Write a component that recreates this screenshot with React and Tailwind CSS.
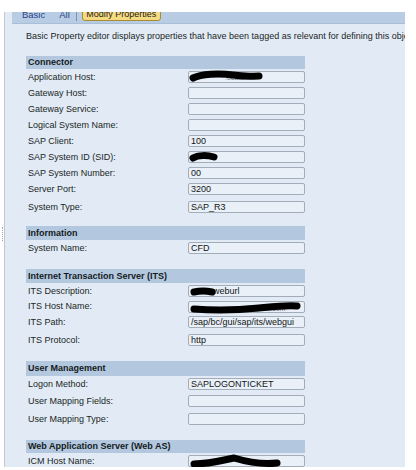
import React from "react"

const sections = [
  {
    title: "Connector",
    mt: "mt-[14px]",
    hh: "h-[13px]",
    rows: [
      { label: "Application Host:", h: "h-[16px]", mark: "app" },
      { label: "Gateway Host:", h: "h-[16px]" },
      { label: "Gateway Service:", h: "h-[16px]" },
      { label: "Logical System Name:", h: "h-[16px]" },
      { label: "SAP Client:", value: "100", h: "h-[16px]" },
      { label: "SAP System ID (SID):", h: "h-[16px]", mark: "sid" },
      { label: "SAP System Number:", value: "00", h: "h-[16px]" },
      { label: "Server Port:", value: "3200", h: "h-[16px]" },
      { label: "System Type:", value: "SAP_R3", h: "h-[20px]" },
    ],
  },
  {
    title: "Information",
    mt: "mt-[9px]",
    hh: "h-[14px]",
    rows: [{ label: "System Name:", value: "CFD", h: "h-[16px]" }],
  },
  {
    title: "Internet Transaction Server (ITS)",
    mt: "mt-[13px]",
    hh: "h-[14px]",
    rows: [
      { label: "ITS Description:", value: "weburl", h: "h-[16px]", mark: "desc" },
      { label: "ITS Host Name:", h: "h-[15px]", mark: "host" },
      { label: "ITS Path:", value: "/sap/bc/gui/sap/its/webgui", h: "h-[16px]" },
      { label: "ITS Protocol:", value: "http", h: "h-[20px]" },
    ],
  },
  {
    title: "User Management",
    mt: "mt-[11px]",
    hh: "h-[15px]",
    rows: [
      { label: "Logon Method:", value: "SAPLOGONTICKET", h: "h-[16px]" },
      { label: "User Mapping Fields:", h: "h-[18px]" },
      { label: "User Mapping Type:", h: "h-[18px]" },
    ],
  },
  {
    title: "Web Application Server (Web AS)",
    mt: "mt-[12px]",
    hh: "h-[13px]",
    rows: [{ label: "ICM Host Name:", h: "h-[16px]", mark: "icm" }],
  },
]

// black marker scribbles that hide the host names
function Scribble({ kind }) {
  if (kind === "app")
    return (
      <svg className="absolute left-0 top-0 overflow-visible" width="117" height="12">
        <text x="36" y="8" fontSize="7" fill="#6b7480" fontFamily="Liberation Sans, Arial, sans-serif">.ocal..</text>
        <path d="M4 6 C12 2, 30 1, 44 3 S62 4, 70 4" stroke="#000" strokeWidth="7" strokeLinecap="round" fill="none" />
      </svg>
    )
  if (kind === "sid")
    return (
      <svg className="absolute left-0 top-0 overflow-visible" width="117" height="12">
        <path d="M4 6 C9 3, 18 3, 25 5" stroke="#000" strokeWidth="7" strokeLinecap="round" fill="none" />
      </svg>
    )
  if (kind === "desc")
    return (
      <svg className="absolute left-0 top-0 overflow-visible" width="117" height="12">
        <path d="M5 6 C10 5, 18 5, 23 6" stroke="#000" strokeWidth="7" strokeLinecap="round" fill="none" />
      </svg>
    )
  if (kind === "host")
    return (
      <svg className="absolute left-0 top-0 overflow-visible" width="117" height="12">
        <text x="70" y="9" fontSize="7" fill="#6b7480" fontFamily="Liberation Sans, Arial, sans-serif">.ale.com</text>
        <path d="M5 7 C30 9, 50 8, 70 6 S98 3, 108 4" stroke="#000" strokeWidth="7" strokeLinecap="round" fill="none" />
      </svg>
    )
  if (kind === "icm")
    return (
      <svg className="absolute left-0 top-0 overflow-visible" width="117" height="12">
        <text x="66" y="8" fontSize="7" fill="#6b7480" fontFamily="Liberation Sans, Arial, sans-serif">....</text>
        <path d="M5 8 C20 8, 35 4, 45 2 C55 5, 70 9, 88 7" stroke="#000" strokeWidth="7" strokeLinecap="round" fill="none" />
      </svg>
    )
  return null
}

function Row({ row }) {
  return (
    <div className={`flex items-center ${row.h}`}>
      <div className="w-[162px] pl-[2px] text-[#1b1f26]">{row.label}</div>
      <div
        className={`relative h-[12px] w-[117px] rounded-[2px] border border-[#a3adb9] bg-[#e9f0f8] leading-[10px] text-[#141414] ${
          row.mark === "desc" ? "pl-[24px]" : "pl-[2px]"
        }`}
      >
        {row.value}
        {row.mark && <Scribble kind={row.mark} />}
      </div>
    </div>
  )
}

export default function App() {
  return (
    <div
      className="relative h-[470px] w-[416px] overflow-hidden bg-white text-[9px] leading-[11px]"
      style={{ fontFamily: '"Liberation Sans", Arial, sans-serif' }}
    >
      <div className="h-[12px]" />
      <div className="flex h-[455px]">
        {/* splitter */}
        <div className="relative w-[5px] border-r border-[#bfc7d0] bg-white">
          <div className="absolute left-[2px] top-[215px] h-[14px] border-l border-dotted border-[#9aa3ad]" />
        </div>

        <div className="w-[400px] overflow-hidden bg-[#e2ebf5]">
          {/* tabs */}
          <div className="ml-[7px] h-[12px] w-[393px] overflow-hidden border-b border-[#a9bfd8] bg-[#b8cde3]">
            <div className="-mt-[6px] flex h-[16px] items-center text-[9.5px]">
              <span className="ml-[10px] text-[#27458a]">Basic</span>
              <span className="ml-[14px] text-[#27458a]">All</span>
              <span className="ml-[6px] h-[14px] border-l border-[#7d93ad]" />
              <span className="ml-[5px] flex h-[14px] w-[79px] items-center justify-center rounded-[3px] border border-[#a98a35] bg-[#f6da80] text-[9px] text-[#222]">
                Modify Properties
              </span>
            </div>
          </div>

          <div className="ml-[21px] mt-[7px] h-[11px] whitespace-nowrap text-[#1b1f26]">
            Basic Property editor displays properties that have been tagged as relevant for defining this object.
          </div>

          <div className="ml-[21px] w-[279px]">
            {sections.map((s) => (
              <div key={s.title} className={s.mt}>
                <div className={`flex items-center ${s.hh} bg-[#b3c8df] pl-[2px] font-bold text-[#151a22]`}>
                  {s.title}
                </div>
                {s.rows.map((r) => (
                  <Row key={r.label} row={r} />
                ))}
              </div>
            ))}
          </div>
        </div>
      </div>
    </div>
  )
}
